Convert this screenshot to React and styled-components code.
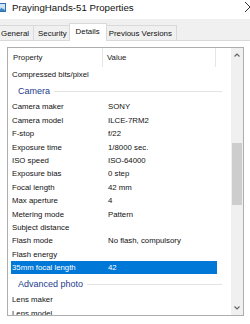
import React from "react";
import styled, { createGlobalStyle } from "styled-components";

const GlobalStyle = createGlobalStyle`
  html, body { margin: 0; padding: 0; background: #fff; }
  body { width: 250px; height: 324px; overflow: hidden; font-family: "Liberation Sans", Arial, sans-serif; }
  * { box-sizing: border-box; }
`;

const Window = styled.div`
  width: 250px;
  height: 324px;
  display: flex;
  flex-direction: column;
  background: #fff;
  overflow: hidden;
`;

const TitleBar = styled.div`
  height: 19px;
  padding-bottom: 5px;
  display: flex;
  align-items: center;
  overflow: hidden;
  background: #fff;
`;

const TitleIcon = styled.svg`
  width: 8px;
  height: 9px;
  margin-left: -2px;
  flex: none;
`;

const TitleText = styled.span`
  margin-left: 6px;
  font-size: 9.7px;
  color: #111;
  white-space: nowrap;
  flex: 1;
`;

const CloseIcon = styled.svg`
  width: 10px;
  height: 10px;
  margin-right: -5px;
  flex: none;
`;

const TabStrip = styled.div`
  height: 22px;
  display: flex;
  align-items: flex-end;
  background: #f0f0f0;
  border-bottom: 1px solid #d9d9d9;
  margin-left: -4px;
`;

const Tab = styled.div`
  position: relative;
  height: ${(p) => (p.$active ? "18px" : "15px")};
  margin-bottom: ${(p) => (p.$active ? "-1px" : "0")};
  margin-left: ${(p) => (p.$first ? "0" : p.$active ? "-3px" : "-1px")};
  margin-right: ${(p) => (p.$active ? "-2px" : "0")};
  padding: ${(p) => (p.$active ? "0 6px 2px" : "0 4px")};
  display: flex;
  align-items: center;
  border: 1px solid #d9d9d9;
  border-bottom: none;
  background: ${(p) => (p.$active ? "#fff" : "#f0f0f0")};
  z-index: ${(p) => (p.$active ? 2 : 1)};
  font-size: 7.9px;
  color: #111;
  white-space: nowrap;
`;

const Panel = styled.div`
  flex: 1;
  min-height: 0;
  display: flex;
  padding: 6px 6px 8px 7px;
  background: #fff;
`;

const ListBox = styled.div`
  flex: 1;
  display: flex;
  border: 1px solid #adadad;
  background: #fff;
  overflow: hidden;
`;

const ListArea = styled.div`
  flex: 1;
  min-width: 0;
  display: flex;
  flex-direction: column;
  overflow: hidden;
`;

const Header = styled.div`
  height: 20px;
  flex: none;
  display: flex;
  font-size: 7.8px;
  color: #222;
`;

const HeaderCell = styled.div`
  width: ${(p) => p.$w}px;
  height: 19px;
  display: flex;
  align-items: center;
  padding-left: ${(p) => p.$pad}px;
  border-right: 1px solid #e5e5e5;
  white-space: nowrap;
`;

const Row = styled.div`
  flex: none;
  height: 13.4px;
  width: 206px;
  margin-left: 3px;
  display: grid;
  grid-template-columns: 97px 1fr;
  align-items: center;
  font-size: 7.8px;
  line-height: 13.4px;
  white-space: nowrap;
  background: ${(p) => (p.$selected ? "#0078d7" : "transparent")};
  color: ${(p) => (p.$selected ? "#fff" : "#111")};
`;

const Label = styled.span`
  padding-left: 1px;
`;

const GroupRow = styled.div`
  flex: none;
  height: 19px;
  display: flex;
  align-items: center;
  padding: 1px 0 0 10px;
  margin-right: 9px;
  gap: 4px;
  font-size: 9px;
  color: #1e3c8c;
  white-space: nowrap;
`;

const GroupLine = styled.div`
  flex: 1;
  height: 1px;
  background: #e3e3e3;
`;

const ScrollBar = styled.div`
  width: 12px;
  flex: none;
  display: flex;
  flex-direction: column;
  background: #f0f0f0;
`;

const ArrowButton = styled.div`
  height: 14px;
  flex: none;
  display: flex;
  align-items: center;
  justify-content: center;
`;

const Track = styled.div`
  flex: 1;
  padding: 81px 1px 0 1px;
`;

const Thumb = styled.div`
  height: 62px;
  background: #cdcdcd;
`;

const rows = [
  { label: "Compressed bits/pixel", value: "" },
  { group: "Camera" },
  { label: "Camera maker", value: "SONY" },
  { label: "Camera model", value: "ILCE-7RM2" },
  { label: "F-stop", value: "f/22" },
  { label: "Exposure time", value: "1/8000 sec." },
  { label: "ISO speed", value: "ISO-64000" },
  { label: "Exposure bias", value: "0 step" },
  { label: "Focal length", value: "42 mm" },
  { label: "Max aperture", value: "4" },
  { label: "Metering mode", value: "Pattern" },
  { label: "Subject distance", value: "" },
  { label: "Flash mode", value: "No flash, compulsory" },
  { label: "Flash energy", value: "" },
  { label: "35mm focal length", value: "42", selected: true },
  { group: "Advanced photo" },
  { label: "Lens maker", value: "" },
  { label: "Lens model", value: "" },
];

const Chevron = ({ up }) => (
  <svg width="6" height="4" viewBox="0 0 6 4">
    <path
      d={up ? "M0.5 3.5 L3 1 L5.5 3.5" : "M0.5 0.5 L3 3 L5.5 0.5"}
      fill="none"
      stroke="#606060"
      strokeWidth="1.1"
    />
  </svg>
);

export default function App() {
  return (
    <>
      <GlobalStyle />
      <Window>
        <TitleBar>
          <TitleIcon viewBox="0 0 8 9">
            <rect x="0.5" y="0.5" width="7" height="8" fill="#cfe4f7" stroke="#2f6fb5" />
            <path d="M1 8 L3.5 4.5 L5 6.5 L6 5.5 L7 8 Z" fill="#3b82c4" />
          </TitleIcon>
          <TitleText>PrayingHands-51 Properties</TitleText>
          <CloseIcon viewBox="0 0 10 10">
            <path d="M0 0 L10 10 M10 0 L0 10" stroke="#333" strokeWidth="1" />
          </CloseIcon>
        </TitleBar>
        <TabStrip>
          <Tab $first>General</Tab>
          <Tab>Security</Tab>
          <Tab $active>Details</Tab>
          <Tab>Previous Versions</Tab>
        </TabStrip>
        <Panel>
          <ListBox>
            <ListArea>
              <Header>
                <HeaderCell $w={95} $pad={5}>Property</HeaderCell>
                <HeaderCell $w={113} $pad={4}>Value</HeaderCell>
              </Header>
              {rows.map((r, i) =>
                r.group ? (
                  <GroupRow key={i}>
                    <span>{r.group}</span>
                    <GroupLine />
                  </GroupRow>
                ) : (
                  <Row key={i} $selected={r.selected}>
                    <Label>{r.label}</Label>
                    <span>{r.value}</span>
                  </Row>
                )
              )}
            </ListArea>
            <ScrollBar>
              <ArrowButton>
                <Chevron up />
              </ArrowButton>
              <Track>
                <Thumb />
              </Track>
              <ArrowButton>
                <Chevron />
              </ArrowButton>
            </ScrollBar>
          </ListBox>
        </Panel>
      </Window>
    </>
  );
}
